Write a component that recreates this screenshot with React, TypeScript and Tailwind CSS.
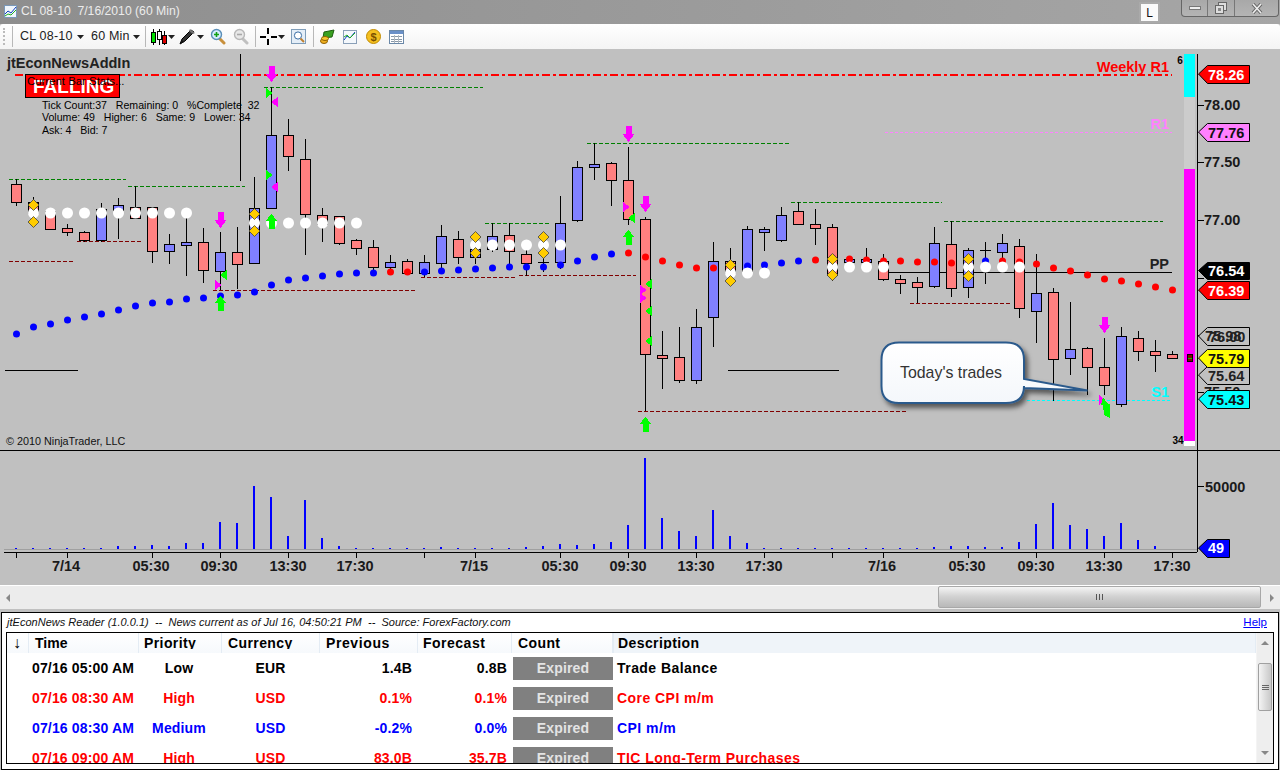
import React from "react";

type C = [number, number, number, number, "p" | "b"];
const candles: C[] = [
  [184,202,179,206,"p"],[202,213,197,213,"p"],[211,229,211,230,"p"],[228,232,224,236,"p"],[232,240,231,242,"p"],
  [209,240,203,242,"b"],[205,210,198,239,"b"],[207,218,186,218,"p"],[207,251,207,263,"p"],[244,251,234,264,"b"],
  [242,245,213,276,"b"],[242,270,228,283,"p"],[252,271,232,290,"b"],[252,264,227,289,"p"],[208,263,177,264,"b"],
  [135,208,87,209,"b"],[135,156,119,171,"p"],[159,214,139,255,"p"],[215,224,208,242,"p"],[216,243,216,245,"p"],
  [240,248,239,255,"p"],[247,267,240,273,"p"],[262,267,255,273,"b"],[261,273,259,274,"p"],[262,273,255,277,"b"],
  [236,263,225,270,"b"],[239,257,231,264,"p"],[249,257,245,264,"b"],[236,249,223,252,"b"],[235,251,223,265,"p"],
  [254,263,250,276,"p"],[262,262,242,272,"p"],[223,262,196,269,"b"],[167,220,161,222,"b"],[164,167,143,180,"b"],
  [163,180,162,206,"p"],[180,219,147,225,"p"],[219,354,217,411,"p"],[355,358,331,389,"p"],[357,380,327,383,"p"],
  [327,380,309,384,"b"],[261,317,242,347,"b"],[261,273,248,282,"p"],[229,271,226,273,"b"],[229,232,227,251,"b"],
  [215,240,207,242,"b"],[211,224,202,225,"p"],[224,228,209,245,"p"],[227,275,224,281,"p"],[259,262,259,268,"b"],
  [259,262,248,268,"b"],[261,279,254,281,"p"],[279,283,275,294,"p"],[282,287,277,303,"p"],[243,286,227,288,"b"],
  [244,288,221,297,"p"],[250,287,248,298,"b"],[250,250,242,284,"b"],[243,252,234,262,"b"],[246,308,239,318,"p"],
  [293,311,254,343,"b"],[292,359,288,401,"p"],[349,358,302,375,"b"],[348,367,347,395,"p"],[367,385,338,395,"p"],
  [336,404,327,407,"b"],[338,351,331,361,"p"],[351,355,340,372,"p"],[354,358,351,358,"p"],
];
const dotY = [334,327,324,320,317,314,310,306,303,302,299,298,296,295,292,285,280,278,276,274,273,273,272,272,272,271,270,269,268,267,267,267,265,261,257,254,253,257,261,265,268,268,265,266,265,263,261,260,258,259,260,261,261,262,262,263,262,261,261,262,264,268,271,275,279,281,284,287,290];
const isRed = (i: number) => [22,23].includes(i) || (i >= 36 && i <= 42) || (i >= 47 && i !== 57);
const cx = (i: number) => 16 + 17 * i;
const whites: [number, number][] = [
  ...[1,2,3,4,5,6,7,8,9,10].map((i): [number, number] => [i, 213]),
  ...[14,15,16,17,18,19,20].map((i): [number, number] => [i, 223]),
  ...[27,28,29,30,31,32].map((i): [number, number] => [i, 245]),
  ...[42,43,44].map((i): [number, number] => [i, 273]),
  ...[48,49,50,51,56,57,58,59].map((i): [number, number] => [i, 267]),
];
const diamonds: [number, number][] = [[33,205],[33,222],[254,214],[254,231],[475,237],[475,253],[543,237],[543,253],[730,265],[730,281],[832,259],[832,275],[968,259],[968,276]];
const volTop = [294,294,294,294,294,294,288,288,285,288,279,279,216,219,108,141,258,150,264,288,294,294,294,294,294,291,294,294,294,294,291,288,282,285,282,276,225,24,204,243,258,180,258,279,294,294,294,294,294,294,294,294,294,294,291,288,288,291,291,276,222,159,225,237,258,219,270,288];
const dashes: [number, number, number, string][] = [
  [264,483,87,"#008000"],[9,126,179,"#008000"],[128,245,186,"#008000"],[587,789,143,"#008000"],[485,551,223,"#008000"],[791,942,202,"#008000"],[944,1163,221,"#006400"],
  [9,75,261,"#800000"],[77,143,241,"#800000"],[213,415,290,"#800000"],[421,517,277,"#800000"],[519,636,275,"#800000"],[638,908,411,"#800000"],[910,1010,303,"#800000"],
];
const downs: [number, number][] = [[220,212],[271,66],[628,126],[645,196],[1104,317]];
const ups: [number, number][] = [[220,296],[271,214],[628,230],[645,417]];
const tri: [number, number, "r" | "l", string][] = [
  [271,93,"l","#00ff00"],[271,102,"r","#ff00ff"],[271,175,"l","#00ff00"],[271,187,"r","#ff00ff"],
  [220,275,"r","#00ff00"],[220,285,"l","#ff00ff"],[628,207,"l","#ff00ff"],[628,218,"r","#00ff00"],
  [645,284,"r","#00ff00"],[645,290,"l","#ff00ff"],[645,298,"l","#ff00ff"],[645,311,"r","#00ff00"],[645,341,"r","#00ff00"],[1104,400,"l","#ff00ff"],
];
const ticks = [16,67,152,220,288,356,424,475,560,628,696,764,832,883,968,1036,1104,1172];
const dateLabels: [number, string][] = [[66,"7/14"],[151,"05:30"],[219,"09:30"],[288,"13:30"],[355,"17:30"],[474,"7/15"],[560,"05:30"],[628,"09:30"],[696,"13:30"],[764,"17:30"],[882,"7/16"],[967,"05:30"],[1036,"09:30"],[1104,"13:30"],[1172,"17:30"]];
const FONT = "'Liberation Sans', Arial, sans-serif";

function Tag({ y, h = 18, fill, text, color, alt }: { y: number; h?: number; fill: string; text: string; color: string; alt?: string }) {
  const m = y + h / 2;
  const points = `1198.5,${m} 1207.5,${y + 0.5} 1249.5,${y + 0.5} 1249.5,${y + h + 0.5} 1207.5,${y + h + 0.5}`;
  return (
    <g>
      <polygon points={points} fill={fill} stroke="#000" strokeWidth={1} />
      {alt && <text x={1205} y={m + 5} fontSize={14.5} fontWeight={700} fill={color} fontFamily={FONT}>{alt}</text>}
      <text x={alt ? 1209 : 1208} y={m + 5.5} fontSize={14.5} fontWeight={700} fill={color} fontFamily={FONT}>{text}</text>
    </g>
  );
}

function Chart() {
  return (
    <svg viewBox="0 49 1280 536" width={1280} height={536} className="block bg-[#c0c0c0]">
      <defs>
        <filter id="sh" x="-20%" y="-20%" width="150%" height="150%">
          <feDropShadow dx="3" dy="4" stdDeviation="2.5" floodColor="#000" floodOpacity="0.55" />
        </filter>
        <linearGradient id="cg" x1="0" y1="0" x2="0" y2="1">
          <stop offset="0" stopColor="#fff" />
          <stop offset="1" stopColor="#f4f7fb" />
        </linearGradient>
      </defs>

      <g shapeRendering="crispEdges">
        <line x1={15} x2={1172} y1={75} y2={75} stroke="#ff0000" strokeWidth={2} strokeDasharray="8 3 3 3" />
        <line x1={885} x2={1172} y1={132.5} y2={132.5} stroke="#ff80ff" strokeWidth={1} strokeDasharray="3 2" />
        <line x1={883} x2={1172} y1={272.5} y2={272.5} stroke="#000" strokeWidth={1} />
        <line x1={1027} x2={1172} y1={400.5} y2={400.5} stroke="#00ffff" strokeWidth={1} strokeDasharray="3 2" />
        {dashes.map(([a, b, y, c], i) => (
          <line key={i} x1={a} x2={b} y1={y + 0.5} y2={y + 0.5} stroke={c} strokeWidth={1} strokeDasharray="4 2" />
        ))}
        <line x1={5} x2={78} y1={370.5} y2={370.5} stroke="#000" />
        <line x1={728} x2={839} y1={370.5} y2={370.5} stroke="#000" />
        <line x1={240.5} x2={240.5} y1={54} y2={181} stroke="#000" />
      </g>

      <g shapeRendering="crispEdges">
        {candles.map(([t, b, h, l, k], i) => {
          const x = cx(i);
          return (
            <g key={i}>
              <line x1={x + 0.5} x2={x + 0.5} y1={h} y2={l} stroke="#000" />
              {t === b ? (
                <line x1={x - 5} x2={x + 6} y1={t + 0.5} y2={t + 0.5} stroke="#000" />
              ) : (
                <rect x={x - 4.5} y={t + 0.5} width={10} height={b - t} fill={k === "p" ? "#ff8080" : "#8080ff"} stroke="#000" />
              )}
            </g>
          );
        })}
      </g>

      <g>
        {dotY.map((y, i) => (
          <circle key={i} cx={cx(i) + 0.5} cy={y} r={3.5} fill={isRed(i) ? "#ff0000" : "#0000ff"} />
        ))}
        {whites.map(([i, y]) => (
          <circle key={`${i}-${y}`} cx={cx(i) + 0.5} cy={y} r={5.5} fill="#fff" />
        ))}
      </g>

      {diamonds.map(([x, y]) => (
        <polygon key={`${x}-${y}`} points={`${x + 0.5},${y - 5.5} ${x + 6},${y} ${x + 0.5},${y + 5.5} ${x - 5},${y}`} fill="#ffcc00" stroke="#404040" strokeWidth={0.8} />
      ))}

      <g shapeRendering="crispEdges">
        {tri.map(([x, y, d, c], i) =>
          d === "l" ? (
            <polygon key={i} points={`${x - 5},${y - 5} ${x + 1.5},${y} ${x - 5},${y + 5}`} fill={c} />
          ) : (
            <polygon key={i} points={`${x + 6.5},${y - 5} ${x},${y} ${x + 6.5},${y + 5}`} fill={c} />
          )
        )}
        {downs.map(([x, y]) => (
          <polygon key={`${x}-${y}`} points={`${x - 2.5},${y} ${x + 3.5},${y} ${x + 3.5},${y + 8} ${x + 6.5},${y + 8} ${x + 0.5},${y + 16} ${x - 5.5},${y + 8} ${x - 2.5},${y + 8}`} fill="#ff00ff" />
        ))}
        {ups.map(([x, y]) => (
          <polygon key={`${x}-${y}`} points={`${x + 0.5},${y} ${x + 6.5},${y + 7} ${x + 3.5},${y + 7} ${x + 3.5},${y + 15} ${x - 2.5},${y + 15} ${x - 2.5},${y + 7} ${x - 5.5},${y + 7}`} fill="#00ff00" />
        ))}
        <polygon points="1103,397 1108,404 1109.5,404 1109.5,418 1104,415 1103,405 1101,405" fill="#00ff00" />
      </g>

      <path
        d="M899 342.5 H1006 Q1024 342.5 1024 360 V379 L1087.5 390.5 L1024 388 V386 Q1024 403 1006 403 H899 Q881.5 403 881.5 386 V360 Q881.5 342.5 899 342.5 Z"
        fill="url(#cg)"
        stroke="#2c5a8c"
        strokeWidth={2}
        filter="url(#sh)"
      />
      <text x={900} y={378} fontSize={15.9} fill="#333" fontFamily={FONT}>Today's trades</text>

      <g fontFamily={FONT}>
        <text x={7} y={68} fontSize={14.5} fontWeight={700} fill="#222">jtEconNewsAddIn</text>
        <rect x={25.5} y={74.5} width={94} height={23} fill="#ff0000" stroke="#000" shapeRendering="crispEdges" />
        <text x={33} y={92.5} fontSize={19} fontWeight={700} fill="#fff">FALLING</text>
        <text x={27} y={85} fontSize={11.4} fill="#000">Current Bar Stats...</text>
        <text x={42} y={109} fontSize={10.6} fill="#000" xmlSpace="preserve">Tick Count:37   Remaining: 0   %Complete  32</text>
        <text x={42} y={121} fontSize={10.6} fill="#000" xmlSpace="preserve">Volume: 49   Higher: 6   Same: 9   Lower: 34</text>
        <text x={42} y={134} fontSize={10.6} fill="#000" xmlSpace="preserve">Ask: 4   Bid: 7</text>
        <text x={6} y={445} fontSize={10.8} fill="#111">© 2010 NinjaTrader, LLC</text>
        <text x={1169} y={72} textAnchor="end" fontSize={14.5} fontWeight={700} fill="#ff0000">Weekly R1</text>
        <text x={1169} y={129} textAnchor="end" fontSize={14.5} fontWeight={700} fill="#ff80ff">R1</text>
        <text x={1169} y={269} textAnchor="end" fontSize={14.5} fontWeight={700} fill="#222">PP</text>
        <text x={1169} y={397} textAnchor="end" fontSize={14.5} fontWeight={700} fill="#00ffff">S1</text>
      </g>

      <g shapeRendering="crispEdges">
        <rect x={1184} y={54} width={11} height={43} fill="#00ffff" />
        <rect x={1184} y={97} width={11} height={72} fill="#cccccc" />
        <rect x={1184} y={169} width={11} height={272} fill="#ff00ff" />
        <rect x={1184} y={441} width={11} height={5} fill="#ffffff" />
        <rect x={1187.5} y={354.5} width={5} height={7} fill="#800000" stroke="#000" />
        <rect x={1188} y={358} width={4} height={1} fill="#00c000" />
        <line x1={1197.5} x2={1197.5} y1={54} y2={552} stroke="#000" />
        <line x1={0} x2={1280} y1={450.5} y2={450.5} stroke="#000" />
        <line x1={4} x2={1197} y1={549.5} y2={549.5} stroke="#a0a0a0" />
        <line x1={4} x2={1197} y1={552.5} y2={552.5} stroke="#000" />
        {[105, 162, 220, 278, 335, 392, 486].map((y) => (
          <line key={y} x1={1198} x2={1204} y1={y + 0.5} y2={y + 0.5} stroke="#000" />
        ))}
        {ticks.map((x) => (
          <line key={x} x1={x + 0.5} x2={x + 0.5} y1={552} y2={558} stroke="#000" />
        ))}
        {volTop.map((t, i) => (
          <rect key={i} x={cx(i) - 1} y={450 + t / 3} width={2} height={549 - 450 - t / 3} fill="#0000ff" />
        ))}
      </g>

      <g fontFamily={FONT} fontWeight={700}>
        <text x={1180} y={64} fontSize={10} fill="#000" textAnchor="middle">6</text>
        <text x={1178} y={444} fontSize={10} fill="#000" textAnchor="middle">34</text>
        {[["78.00", 110], ["77.50", 167], ["77.00", 225], ["75.50", 397]].map(([t, y]) => (
          <text key={t as string} x={1204} y={y as number} fontSize={14.5} fill="#1a1a1a">{t}</text>
        ))}
        <text x={1205} y={492} fontSize={14.5} fill="#1a1a1a">50000</text>
        {dateLabels.map(([x, t]) => (
          <text key={`${x}`} x={x} y={571} fontSize={14.5} fill="#1a1a1a" textAnchor="middle">{t}</text>
        ))}
      </g>

      <Tag y={65} fill="#ff0000" text="78.26" color="#fff" />
      <Tag y={123} fill="#ff80ff" text="77.76" color="#111" />
      <Tag y={327} fill="#c0c0c0" text="76.00" alt="75.98" color="#222" />
      <Tag y={366} fill="#c0c0c0" text="75.64" color="#222" />
      <Tag y={262} h={17} fill="#000000" text="76.54" color="#fff" />
      <Tag y={281} fill="#ff0000" text="76.39" color="#fff" />
      <Tag y={349} fill="#ffff00" text="75.79" color="#111" />
      <Tag y={390} fill="#00ffff" text="75.43" color="#111" />
      <polygon points="1198.5,548 1207.5,539.5 1229.5,539.5 1229.5,557.5 1207.5,557.5" fill="#0000ff" stroke="#000" />
      <text x={1208} y={553} fontSize={14.5} fontWeight={700} fill="#fff" fontFamily={FONT}>49</text>
    </svg>
  );
}

const Arrow = ({ className = "" }: { className?: string }) => (
  <svg width="7" height="4" viewBox="0 0 7 4" className={`shrink-0 ${className}`}><path d="M0 0h7L3.5 4z" fill="#222" /></svg>
);
const Sep = ({ className = "" }: { className?: string }) => <div className={`w-px h-[21px] bg-[#b8b8b8] shrink-0 ${className}`} />;

function Toolbar() {
  return (
    <div className="h-[25px] bg-gradient-to-b from-[#ffffff] to-[#f4f4f4] rounded-t-[3px] flex items-center text-[12.5px] text-[#222] font-['Liberation_Sans',sans-serif]">
      <div className="w-[2px] h-[17px] ml-[3px] border-l-2 border-dotted border-[#bbb] shrink-0" />
      <Sep className="ml-[7px]" />
      <span className="ml-[7px] w-[57px] shrink-0 tracking-[0.2px]">CL 08-10</span>
      <Arrow />
      <span className="ml-[7px] w-[42px] shrink-0 tracking-[0.2px]">60 Min</span>
      <Arrow />
      <Sep className="ml-[5px]" />
      <svg className="ml-[4px] shrink-0" width="17" height="16" viewBox="0 0 17 16" shapeRendering="crispEdges">
        <path d="M3.5 0v16M9.5 0v16M14.5 2v14" stroke="#000" />
        <rect x="1.5" y="3.5" width="4" height="10" fill="#00e000" stroke="#000" />
        <rect x="7.5" y="2.5" width="4" height="8" fill="#fff" stroke="#000" />
        <rect x="12.5" y="6.5" width="4" height="8" fill="#e00000" stroke="#000" />
      </svg>
      <Arrow className="ml-[1px]" />
      <svg className="ml-[4px] shrink-0" width="17" height="17" viewBox="0 0 17 17">
        <path d="M1 16l2-5L12 2l3 2-9 9z" fill="#333" stroke="#000" />
        <path d="M11 1l5 4-2 1-4-3z" fill="#777" />
        <path d="M1 16l2-4 2 2z" fill="#111" />
      </svg>
      <Arrow className="ml-[1px]" />
      <svg className="ml-[6px] shrink-0" width="16" height="17" viewBox="0 0 16 17">
        <path d="M9 10l5 5" stroke="#c8903c" strokeWidth="3" strokeLinecap="round" />
        <circle cx="6.5" cy="6.5" r="5" fill="#d6ecff" stroke="#5a8fb8" strokeWidth="1.4" />
        <path d="M4 6.5h5M6.5 4v5" stroke="#12a012" strokeWidth="1.6" />
      </svg>
      <svg className="ml-[7px] shrink-0" width="16" height="17" viewBox="0 0 16 17">
        <path d="M9 10l5 5" stroke="#c0c0c0" strokeWidth="3" strokeLinecap="round" />
        <circle cx="6.5" cy="6.5" r="5" fill="#e8e8e8" stroke="#b8b8b8" strokeWidth="1.4" />
        <path d="M4 6.5h5" stroke="#a8a8a8" strokeWidth="1.6" />
      </svg>
      <Sep className="ml-[6px]" />
      <svg className="ml-[4px] shrink-0" width="17" height="17" viewBox="0 0 17 17" shapeRendering="crispEdges">
        <path d="M8 0v6M8 11v6M0 8.5h6M11 8.5h6" stroke="#000" strokeWidth="2" />
      </svg>
      <Arrow className="ml-[1px]" />
      <svg className="ml-[6px] shrink-0" width="15" height="15" viewBox="0 0 15 15">
        <rect x="0.5" y="0.5" width="14" height="14" fill="#e4eef8" stroke="#7f9db9" />
        <circle cx="7" cy="6.5" r="3.6" fill="#fff" stroke="#3a6ea5" />
        <path d="M9.5 9.5l3.5 3.5" stroke="#c08030" strokeWidth="2" />
      </svg>
      <Sep className="ml-[7px]" />
      <svg className="ml-[6px] shrink-0" width="15" height="15" viewBox="0 0 15 15">
        <path d="M4 3l10-2-2 7-9 1z" fill="#3aa020" stroke="#1d6010" />
        <ellipse cx="4" cy="12" rx="3.5" ry="2.5" fill="#f0b020" stroke="#906000" />
        <ellipse cx="5" cy="9.5" rx="3.5" ry="2" fill="#f8c830" stroke="#906000" />
      </svg>
      <svg className="ml-[8px] shrink-0" width="14" height="14" viewBox="0 0 14 14">
        <rect x="0.5" y="0.5" width="13" height="13" fill="#f4f8fc" stroke="#8aa0b8" />
        <path d="M1 10l3-4 3 2 5-6" stroke="#1040c0" fill="none" />
        <path d="M1 7l3-2 3 3 5-5" stroke="#20b020" fill="none" />
      </svg>
      <svg className="ml-[9px] shrink-0" width="15" height="15" viewBox="0 0 15 15">
        <circle cx="7.5" cy="7.5" r="7" fill="#f4c020" stroke="#c08a00" />
        <text x="7.5" y="11.5" fontSize="11" fontWeight="700" textAnchor="middle" fill="#7a5000" fontFamily={FONT}>$</text>
      </svg>
      <svg className="ml-[8px] shrink-0" width="15" height="14" viewBox="0 0 15 14" shapeRendering="crispEdges">
        <rect x="0.5" y="0.5" width="14" height="13" fill="#fff" stroke="#6a88a8" />
        <rect x="1" y="1" width="13" height="3" fill="#6a90c8" />
        <path d="M2 6.5h11M2 9h11M2 11.5h11" stroke="#8898a8" />
        <path d="M5.5 5v8M9.5 5v8" stroke="#b0b8c0" />
      </svg>
    </div>
  );
}

function TitleBar() {
  return (
    <div className="h-6 bg-gradient-to-r from-[#8e8e8e] via-[#9a9a9a] to-[#a6a6a6] flex items-start font-['Liberation_Sans',sans-serif]">
      <svg className="ml-[4px] mt-[5px] shrink-0" width="13" height="13" viewBox="0 0 13 13">
        <rect x="0.5" y="0.5" width="12" height="12" fill="#f0f6fc" stroke="#7a98b8" />
        <path d="M1 9l3-3 3 2 5-6" stroke="#1040c0" fill="none" />
        <path d="M1 11l3-2 3 1 5-5" stroke="#20b020" fill="none" />
      </svg>
      <span className="ml-[4px] mt-[4px] text-[12.2px] leading-[15px] text-[#ececec] whitespace-pre">CL 08-10  7/16/2010 (60 Min)</span>
      <div className="ml-auto mt-[3px] mr-[21px] w-[17px] h-[17px] bg-[#fafafa] border-2 border-[#aaa] flex items-center justify-center text-[12px] text-[#111] box-content -translate-y-[1px]">L</div>
      <div className="flex h-[17px] w-[98px] rounded-b-[4px] border border-t-0 border-[#666] bg-gradient-to-b from-[#a8a8a8] to-[#b4b4b4] mr-[1px]">
        <div className="w-[26px] border-r border-[#777] flex items-center justify-center">
          <div className="w-[12px] h-[4px] bg-[#eee] border border-[#777]" />
        </div>
        <div className="w-[27px] border-r border-[#777] flex items-center justify-center">
          <svg width="12" height="12" viewBox="0 0 12 12"><rect x="3.5" y="0.5" width="8" height="8" fill="#ddd" stroke="#666" /><rect x="0.5" y="3.5" width="8" height="8" fill="#ddd" stroke="#666" /><rect x="3" y="6" width="3" height="3" fill="#888" /></svg>
        </div>
        <div className="flex-1 flex items-center justify-center">
          <svg width="12" height="11" viewBox="0 0 12 11"><path d="M2 1l8 9M10 1l-8 9" stroke="#666" strokeWidth="3.4" /><path d="M2 1l8 9M10 1l-8 9" stroke="#eee" strokeWidth="1.6" /></svg>
        </div>
      </div>
    </div>
  );
}

function HScroll() {
  return (
    <div className="h-[27px] bg-[#c0c0c0] flex flex-col">
      <div className="h-px bg-white" />
      <div className="h-[23px] bg-[#ececec] flex items-center">
        <svg className="ml-[6px]" width="4" height="8" viewBox="0 0 4 8"><path d="M4 0v8L0 4z" fill="#888" /></svg>
        <div className="ml-[928px] w-[323px] h-[22px] self-start rounded-[2px] border border-[#a8a8a8] bg-gradient-to-b from-[#f4f4f4] via-[#d0d0d0] to-[#b8b8b8] flex items-center justify-center">
          <div className="flex gap-[2px]"><div className="w-px h-[6px] bg-[#555]" /><div className="w-px h-[6px] bg-[#555]" /><div className="w-px h-[6px] bg-[#555]" /></div>
        </div>
        <svg className="ml-[9px]" width="4" height="8" viewBox="0 0 4 8"><path d="M0 0v8l4-4z" fill="#888" /></svg>
      </div>
      <div className="flex-1" />
    </div>
  );
}

const COLS = "grid grid-cols-[22px_110px_83px_98px_98px_94px_101px_1fr]";
const rows = [
  { c: "text-black", t: "07/16 05:00 AM", p: "Low", u: "EUR", pr: "1.4B", f: "0.8B", d: "Trade Balance" },
  { c: "text-[#ff0000]", t: "07/16 08:30 AM", p: "High", u: "USD", pr: "0.1%", f: "0.1%", d: "Core CPI m/m" },
  { c: "text-[#0000ff]", t: "07/16 08:30 AM", p: "Medium", u: "USD", pr: "-0.2%", f: "0.0%", d: "CPI m/m" },
  { c: "text-[#ff0000]", t: "07/16 09:00 AM", p: "High", u: "USD", pr: "83.0B", f: "35.7B", d: "TIC Long-Term Purchases" },
];
const heads: [string, string][] = [["↓", "pl-[6px] text-[16px]"], ["Time", "pl-[6px]"], ["Priority", "pl-[5px] tracking-[0.4px]"], ["Currency", "pl-[6px] tracking-[0.4px]"], ["Previous", "pl-[6px] tracking-[0.6px]"], ["Forecast", "pl-[5px] tracking-[0.5px]"], ["Count", "pl-[6px] tracking-[0.4px]"], ["Description", "pl-[4px] tracking-[0.4px]"]];

function News() {
  return (
    <div className="h-[158px] bg-white border border-black mx-px font-['Liberation_Sans',sans-serif]">
      <div className="h-[19px] flex items-center justify-between pl-[5px] pr-[11px]">
        <span className="italic text-[11px] text-[#111] whitespace-pre tracking-[0.02px]">jtEconNews Reader (1.0.0.1)  --  News current as of Jul 16, 04:50:21 PM  --  Source: ForexFactory.com</span>
        <span className="text-[11.5px] text-[#0000ff] underline">Help</span>
      </div>
      <div className="h-[132px] mx-[4px] border border-black flex overflow-hidden">
        <div className="flex-1 min-w-0">
          <div className={`${COLS} h-5 overflow-hidden`}>
            {heads.map(([t, pad], i) => (
              <div key={t} className={`h-5 border-r border-[#e4ecf4] ${i === 7 ? "bg-[#eff4f9] border-l" : "bg-gradient-to-b from-white to-[#f6f9fc]"}`}>
                <div className={`${pad} h-[16px] text-[14px] font-bold leading-[20px] text-black whitespace-nowrap overflow-hidden`}>{t}</div>
              </div>
            ))}
          </div>
          {rows.map((r, i) => (
            <div key={i} className={`${COLS} ${r.c} h-[30px] items-center text-[14px] font-bold whitespace-nowrap tracking-[0.15px]`}>
              <div />
              <div className="pl-[3px]">{r.t}</div>
              <div className="text-center -ml-[3px]">{r.p}</div>
              <div className="text-center -ml-[1px]">{r.u}</div>
              <div className="text-right pr-[6px]">{r.pr}</div>
              <div className="text-right pr-[5px]">{r.f}</div>
              <div className="pl-px"><div className="w-[100px] h-[23px] bg-[#808080] text-[#e4e4e4] leading-[23px] text-center">Expired</div></div>
              <div className="pl-[4px] tracking-[0.45px]">{r.d}</div>
            </div>
          ))}
        </div>
        <div className="w-[17px] bg-[#eeeeee] flex flex-col items-center shrink-0 border-l border-[#f4f4f4]">
          <svg className="mt-[8px]" width="8" height="4" viewBox="0 0 8 4"><path d="M0 4h8L4 0z" fill="#888" /></svg>
          <div className="mt-[18px] w-[14px] h-[48px] rounded-[2px] border border-[#a0a0a0] bg-gradient-to-r from-[#f4f4f4] to-[#c8c8c8] flex flex-col items-center justify-center gap-px">
            <div className="w-[7px] h-px bg-[#666]" /><div className="w-[7px] h-px bg-[#666]" /><div className="w-[7px] h-px bg-[#666]" />
          </div>
          <svg className="mt-auto mb-[8px]" width="8" height="4" viewBox="0 0 8 4"><path d="M0 0h8L4 4z" fill="#888" /></svg>
        </div>
      </div>
    </div>
  );
}

export default function App() {
  return (
    <div className="w-[1280px] h-[770px] overflow-hidden bg-[#c0c0c0] flex flex-col">
      <TitleBar />
      <Toolbar />
      <Chart />
      <HScroll />
      <News />
    </div>
  );
}
